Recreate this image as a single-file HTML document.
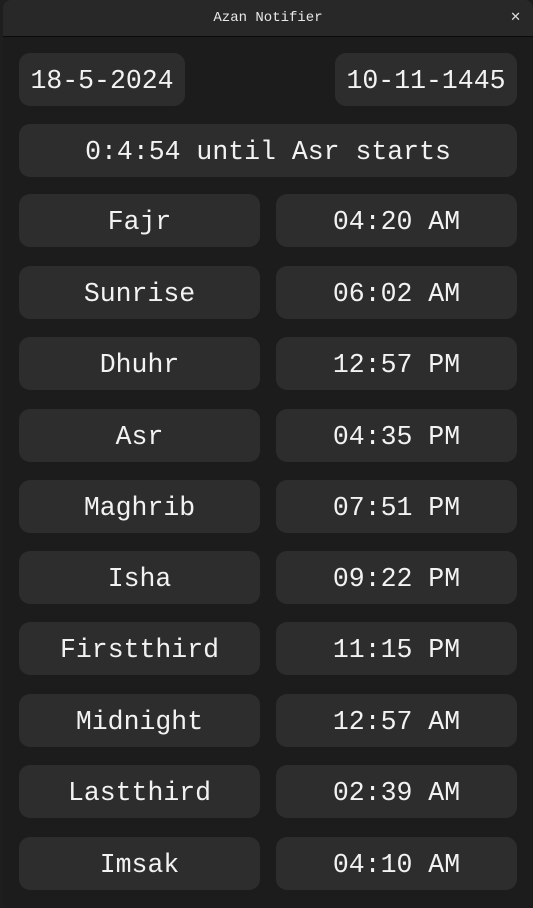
<!DOCTYPE html>
<html><head><style>
html,body{margin:0;padding:0;background:#1e1e1e;}
body{width:533px;height:908px;position:relative;overflow:hidden;font-family:"Liberation Mono","DejaVu Sans Mono",monospace;color:#f2f2f2;}
.win{position:absolute;left:3px;top:0;right:0;bottom:0;background:#1c1c1c;border-top-left-radius:8px;border-top-right-radius:8px;overflow:hidden;}
.tb{position:absolute;left:0;right:0;top:0;height:36px;background:#282828;border-bottom:1px solid #0a0a0a;text-align:center;line-height:36px;font-size:14px;color:#e8e8e8;}
.x{position:absolute;right:12px;top:0;font-size:13px;font-family:"DejaVu Sans",sans-serif;color:#ddd;}
.b{position:absolute;background:#2d2d2d;border-radius:11px;height:53px;line-height:57px;text-align:center;font-size:26.5px;}
</style></head><body>
<div class="win">
<div class="tb">Azan Notifier<span class="x">✕</span></div>
</div>
<div class="b" style="left:19px;top:53px;width:166px">18-5-2024</div>
<div class="b" style="left:335px;top:53px;width:182px">10-11-1445</div>
<div class="b" style="left:19px;top:124px;width:498px">0:4:54 until Asr starts</div>
<div class="b" style="left:19px;top:194px;width:241px">Fajr</div><div class="b" style="left:276px;top:194px;width:241px">04:20 AM</div>
<div class="b" style="left:19px;top:266px;width:241px">Sunrise</div><div class="b" style="left:276px;top:266px;width:241px">06:02 AM</div>
<div class="b" style="left:19px;top:337px;width:241px">Dhuhr</div><div class="b" style="left:276px;top:337px;width:241px">12:57 PM</div>
<div class="b" style="left:19px;top:409px;width:241px">Asr</div><div class="b" style="left:276px;top:409px;width:241px">04:35 PM</div>
<div class="b" style="left:19px;top:480px;width:241px">Maghrib</div><div class="b" style="left:276px;top:480px;width:241px">07:51 PM</div>
<div class="b" style="left:19px;top:551px;width:241px">Isha</div><div class="b" style="left:276px;top:551px;width:241px">09:22 PM</div>
<div class="b" style="left:19px;top:622px;width:241px">Firstthird</div><div class="b" style="left:276px;top:622px;width:241px">11:15 PM</div>
<div class="b" style="left:19px;top:694px;width:241px">Midnight</div><div class="b" style="left:276px;top:694px;width:241px">12:57 AM</div>
<div class="b" style="left:19px;top:765px;width:241px">Lastthird</div><div class="b" style="left:276px;top:765px;width:241px">02:39 AM</div>
<div class="b" style="left:19px;top:837px;width:241px">Imsak</div><div class="b" style="left:276px;top:837px;width:241px">04:10 AM</div>
</body></html>
